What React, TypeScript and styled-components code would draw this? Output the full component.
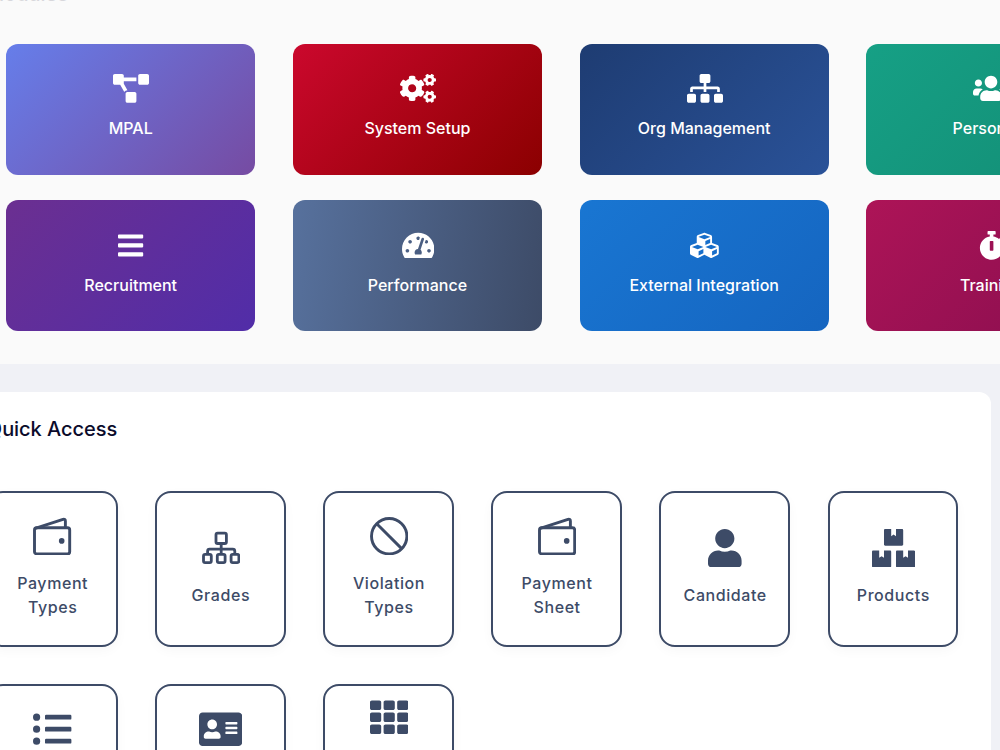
import React from 'react';
import styled, { createGlobalStyle } from 'styled-components';
import {
  FaProjectDiagram, FaCogs, FaSitemap, FaUsers, FaBars, FaTachometerAlt, FaCubes, FaStopwatch,
  FaUser, FaBoxes, FaListUl, FaAddressCard, FaTh,
} from 'react-icons/fa';

const GlobalStyle = createGlobalStyle`
  * { box-sizing: border-box; }
  body {
    margin: 0;
    background: #f0f1f6;
    font-family: Inter, "Liberation Sans", sans-serif;
    overflow: hidden;
  }
`;

const Page = styled.main`
  width: 1000px;
  height: 750px;
  overflow: hidden;
`;

const ModulesSection = styled.section`
  height: 364px;
  background: #fafafa;
  overflow: hidden;
`;

const SectionTitle = styled.h2`
  margin: 0;
  font-size: 20px;
  line-height: 24px;
  font-weight: 500;
  letter-spacing: -0.04px;
  color: #0b0b2b;
`;

const ModulesTitle = styled(SectionTitle)`
  margin: -18px 0 38px -14px;
  opacity: 0.14;
`;

const ModuleGrid = styled.div`
  display: grid;
  grid-template-columns: repeat(4, 249px);
  grid-auto-rows: 131px;
  gap: 25.4px 37.75px;
  padding-left: 6.2px;
`;

const ModuleCard = styled.a<{ $fill: string }>`
  display: flex;
  flex-direction: column;
  align-items: center;
  gap: 13px;
  padding-top: 30px;
  border-radius: 12px;
  background: ${(p) => p.$fill};
  color: #fff;
  font-size: 16px;
  line-height: 24px;
  font-weight: 500;
  white-space: nowrap;

  &:nth-child(n + 5) { padding-top: 31px; }

  > span { margin-left: 0.7px; }
`;

const IconBox = styled.span<{ $width: number; $height: number }>`
  display: flex;
  flex: none;
  width: ${(p) => p.$width}px;
  height: ${(p) => p.$height}px;

  svg { width: 100%; height: 100%; }
`;

const QuickPanel = styled.section`
  width: 1020px;
  height: 420px;
  margin: 28px 0 0 -29px;
  padding: 25px 0 0 15.8px;
  background: #fff;
  border-radius: 12px;
`;

const QuickGrid = styled.div`
  display: grid;
  grid-template-columns: repeat(6, 130.75px);
  grid-auto-rows: 156px;
  gap: 37.4px;
  margin-top: 50px;
`;

const QuickCard = styled.a`
  display: flex;
  flex-direction: column;
  align-items: center;
  justify-content: center;
  gap: 15.6px;
  padding: 0 13px 2px 14px;
  border: 2px solid #3d4b67;
  border-radius: 16px;
  background: #fff;
  box-shadow: 0 4px 12px rgba(0, 0, 0, 0.03);
  color: #3d4b67;
`;

const QuickLabel = styled.span`
  font-size: 16px;
  line-height: 24px;
  font-weight: 500;
  letter-spacing: 0.58px;
  text-align: center;
`;

const WalletIcon = () => (
  <svg viewBox="0 0 38.4 38.4" fill="none" stroke="currentColor" strokeWidth="2.9" strokeLinejoin="round">
    <rect x="1.5" y="10.8" width="35.2" height="26.2" rx="2.2" />
    <path d="M2.2 11.4 30 2.4q2.4-.6 2.4 1.6v6.8" />
    <circle cx="28.7" cy="23.9" r="2.8" fill="currentColor" stroke="none" />
  </svg>
);

const HierarchyIcon = () => (
  <svg viewBox="0 0 38.4 38.4" fill="none" stroke="currentColor" strokeWidth="2.8">
    <rect x="14" y="4.1" width="10.4" height="10.4" rx="1.6" />
    <rect x="1.5" y="25.4" width="7.8" height="8.2" rx="1.6" />
    <rect x="15.3" y="25.4" width="7.8" height="8.2" rx="1.6" />
    <rect x="29.1" y="25.4" width="7.8" height="8.2" rx="1.6" />
    <path d="M19.2 14.6v11M5.6 25.4v-3.2q0-2 2-2h23.2q2 0 2 2v3.2" />
  </svg>
);

const BanIcon = () => (
  <svg viewBox="0 0 38.4 38.4" fill="none" stroke="currentColor" strokeWidth="2.9">
    <circle cx="19.2" cy="19.2" r="17.7" />
    <path d="m7 7 24.4 24.4" />
  </svg>
);

const modules = [
  { label: 'MPAL', Icon: FaProjectDiagram, width: 36, fill: 'linear-gradient(135deg, #667eea, #764ba2)' },
  { label: 'System Setup', Icon: FaCogs, width: 36, fill: 'linear-gradient(135deg, #cb082d, #8b0000)' },
  { label: 'Org Management', Icon: FaSitemap, width: 36, fill: 'linear-gradient(135deg, #1e3c72, #2a5298)' },
  { label: 'Personnel', Icon: FaUsers, width: 36, fill: 'linear-gradient(135deg, #16a085, #138d75)' },
  { label: 'Recruitment', Icon: FaBars, width: 25.2, fill: 'linear-gradient(135deg, #6b2f91, #512da8)' },
  { label: 'Performance', Icon: FaTachometerAlt, width: 32.4, fill: 'linear-gradient(98deg, #57719d, #3d4b67)' },
  { label: 'External Integration', Icon: FaCubes, width: 28.8, fill: 'linear-gradient(135deg, #1976d2, #1565c0)' },
  { label: 'Training', Icon: FaStopwatch, width: 25.2, fill: 'linear-gradient(135deg, #ad1457, #880e4f)' },
];

const shortcuts = [
  { label: 'Payment Types', Icon: WalletIcon, width: 38.4 },
  { label: 'Grades', Icon: HierarchyIcon, width: 38.4 },
  { label: 'Violation Types', Icon: BanIcon, width: 38.4 },
  { label: 'Payment Sheet', Icon: WalletIcon, width: 38.4 },
  { label: 'Candidate', Icon: FaUser, width: 33.6 },
  { label: 'Products', Icon: FaBoxes, width: 43.2 },
  { label: 'Request Types', Icon: FaListUl, width: 38.4 },
  { label: 'Employee Cards', Icon: FaAddressCard, width: 43.2 },
  { label: 'Payroll Element Groups', Icon: FaTh, width: 38.4 },
];

export default function App() {
  return (
    <Page>
      <GlobalStyle />
      <ModulesSection>
        <ModulesTitle>Modules</ModulesTitle>
        <ModuleGrid>
          {modules.map(({ label, Icon, width, fill }) => (
            <ModuleCard key={label} $fill={fill}>
              <IconBox $width={width} $height={28.8}><Icon /></IconBox>
              {label}
            </ModuleCard>
          ))}
        </ModuleGrid>
      </ModulesSection>
      <QuickPanel>
        <SectionTitle>Quick Access</SectionTitle>
        <QuickGrid>
          {shortcuts.map(({ label, Icon, width }) => (
            <QuickCard key={label}>
              <IconBox $width={width} $height={38.4}><Icon /></IconBox>
              <QuickLabel>{label}</QuickLabel>
            </QuickCard>
          ))}
        </QuickGrid>
      </QuickPanel>
    </Page>
  );
}
